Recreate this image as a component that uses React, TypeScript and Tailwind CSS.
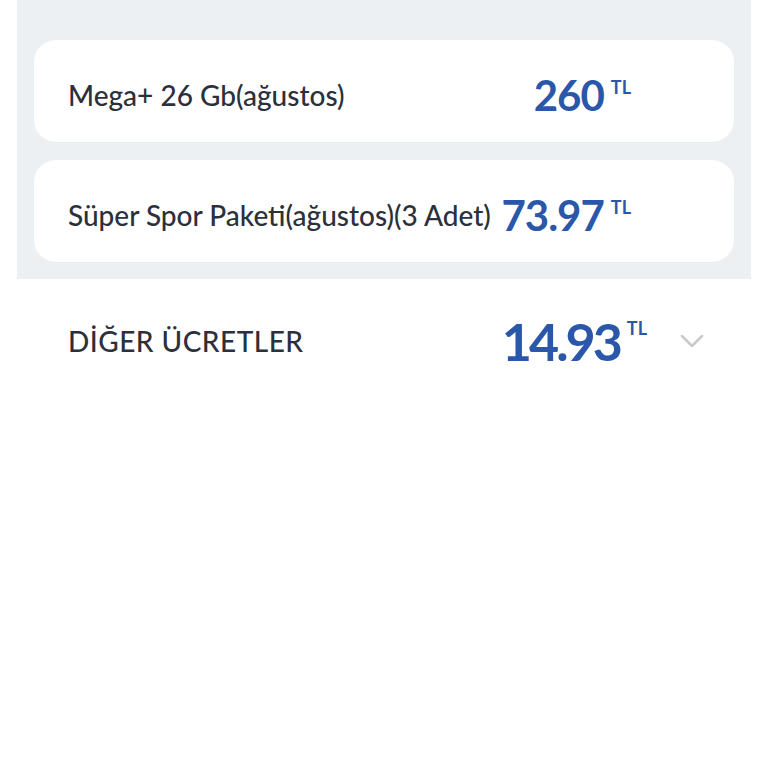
interface Charge {
  label: string
  amount: string
}

const charges: Charge[] = [
  { label: 'Mega+ 26 Gb(ağustos)', amount: '260' },
  { label: 'Süper Spor Paketi(ağustos)(3 Adet)', amount: '73.97' },
]

const Price = ({ amount, big }: { amount: string; big?: boolean }) => (
  <div className="flex items-start text-[#2a57a9]">
    <span
      className={
        big
          ? 'text-[52px] font-bold leading-none tracking-[-3px]'
          : 'text-[42px] font-bold leading-none tracking-[-1px]'
      }
    >
      {amount}
    </span>
    <span className="ml-[7px] mt-[4px] text-[18px] font-bold leading-none">TL</span>
  </div>
)

export default function App() {
  return (
    <div className="min-h-[768px] bg-white font-['Lato',sans-serif] text-[#2b303b]">
      <div className="mx-[17px] flex flex-col gap-[18px] bg-[#edf0f3] px-[17px] pb-[17px] pt-[40px]">
        {charges.map((c) => (
          <div
            key={c.label}
            className="flex h-[102px] items-center rounded-[22px] bg-white pl-[34px] pr-[103px] pt-[8px]"
          >
            <span className="flex-1 text-[28px] font-medium">{c.label}</span>
            <Price amount={c.amount} />
          </div>
        ))}
      </div>

      <div className="flex h-[124px] items-center pl-[68px] pr-[64px]">
        <span className="flex-1 text-[28px] font-medium tracking-[0.5px]">DİĞER ÜCRETLER</span>
        <Price amount="14.93" big />
        <svg
          viewBox="0 0 24 14"
          className="ml-[33px] h-[14px] w-[24px] text-[#c9c9c9]"
          fill="none"
          stroke="currentColor"
          strokeWidth={2.5}
          strokeLinecap="round"
          strokeLinejoin="round"
        >
          <polyline points="2,2 12,12 22,2" />
        </svg>
      </div>
    </div>
  )
}
